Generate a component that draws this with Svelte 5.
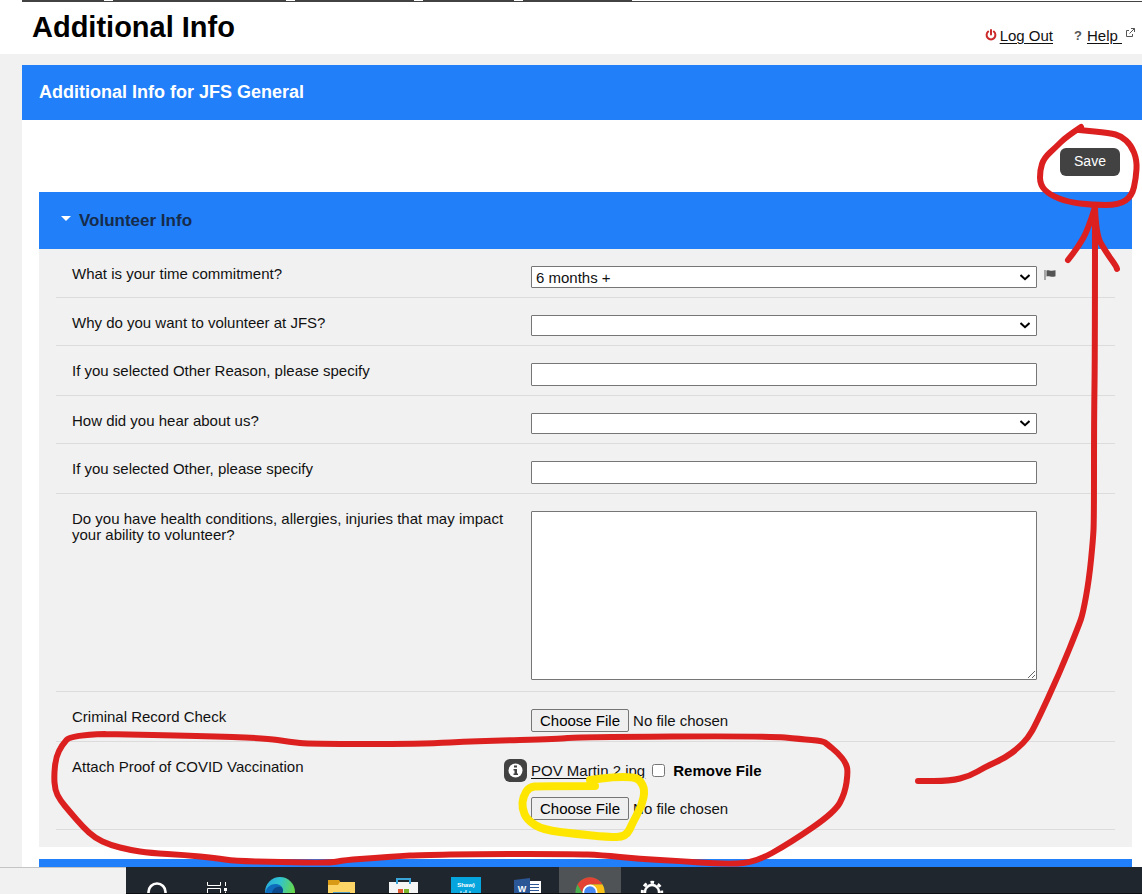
<script>
    let commitment = $state('6 months +');
    let reason = $state('');
    let source = $state('');
    let removeFile = $state(false);
    let open = $state(true);

    const tabs = [82, 173, 119, 91, 109];

    const marks = [
        {
            name: 'red',
            points: [[1081, 127], [1066, 137], [1056, 147], [1044, 158], [1040, 170], [1040, 185], [1050, 195], [1068, 202], [1092, 205], [1119, 205], [1132, 196], [1136, 178], [1137, 160], [1131, 145], [1121, 136], [1110, 133], [1079, 130]]
        },
        { name: 'red', points: [[1095, 207], [1088, 230], [1078, 247], [1068, 260]] },
        { name: 'red', points: [[1095, 207], [1096, 235], [1106, 252], [1116, 266], [1117, 269]] },
        {
            name: 'red',
            points: [[1095, 207], [1095, 350], [1094, 420], [1094, 520], [1093, 540], [1089, 580], [1083, 613], [1079, 625], [1060, 672], [1036, 724], [1028, 738], [1018, 748], [1005, 758], [985, 767], [970, 776], [950, 781], [918, 781]]
        },
        {
            name: 'red',
            points: [[105, 734], [71, 735], [62, 745], [56, 757], [54, 775], [55, 790], [60, 800], [70, 812], [83, 827], [95, 838], [110, 845], [130, 850], [150, 853], [185, 855], [215, 858], [235, 861], [280, 862], [330, 863], [345, 860], [375, 858], [400, 856], [420, 855], [480, 854], [575, 854], [600, 855], [640, 859], [680, 861], [720, 864], [754, 863], [790, 843], [835, 812], [845, 793], [848, 772], [846, 763], [838, 753], [827, 744], [823, 741], [800, 739], [770, 736], [575, 737], [560, 739], [480, 741], [420, 744], [310, 744], [290, 742], [265, 738], [200, 736], [105, 734]]
        },
        {
            name: 'yellow',
            points: [[595, 786], [540, 786], [529, 787], [523, 797], [522, 808], [527, 820], [543, 830], [577, 834], [607, 837], [626, 837], [633, 822], [642, 805], [645, 790], [640, 780], [633, 777], [613, 777], [590, 780]]
        }
    ];

    // smooth the pen points by curving through the middle of each segment
    function toPath(points) {
        let d = `M${points[0]}`;
        for (let i = 1; i < points.length - 1; i++) {
            const [x, y] = points[i];
            const [nx, ny] = points[i + 1];
            d += ` Q${x} ${y} ${(x + nx) / 2} ${(y + ny) / 2}`;
        }
        return d + ` L${points[points.length - 1]}`;
    }
</script>

<div class="screen">
    <div class="top">
        <nav class="tabs" aria-label="Sections">
            {#each tabs as width}
                <span class="tab" style="width: {width}px"></span>
            {/each}
        </nav>
    </div>

    <header class="header">
        <h1>Additional Info</h1>
        <div class="links">
            <svg class="power" viewBox="0 0 12 12" fill="none" stroke="#cc2a2a" stroke-width="2" stroke-linecap="round">
                <path d="M3.2 2.6A4.4 4.4 0 1 0 8.8 2.6M6 1V5.6" />
            </svg>
            <a href="#logout">Log Out</a>
            <span class="question">?</span>
            <a class="help" href="#help">Help&nbsp;</a>
            <svg class="external" viewBox="0 0 11 11" fill="none" stroke="#555">
                <path d="M4 3.5H1.5V9.500H7.500V7M4.500 6.500L9.500 1.500M6 1.500H9.500V5" />
            </svg>
        </div>
    </header>

    <main class="main">
        <h2>Additional Info for JFS General</h2>
        <form onsubmit={(e) => e.preventDefault()}>
            <div class="toolbar">
                <button class="save" type="submit">Save</button>
            </div>

            <section class="panel">
                <h3>
                    <button class="toggle" type="button" aria-expanded={open} onclick={() => (open = !open)}>
                        <svg viewBox="0 0 10 5" fill="#fff"><path d="M0 0H10L5 5Z" /></svg>
                        Volunteer Info
                    </button>
                </h3>
                {#if open}
                    <div class="fields">
                        <div class="row">
                            <div class="label"><label for="commitment">What is your time commitment?</label></div>
                            <select id="commitment" class="filled" bind:value={commitment}>
                                <option>6 months +</option>
                            </select>
                            <svg class="flag" viewBox="0 0 12 12">
                                <path d="M1 1V11" stroke="#888" stroke-width="1.400" />
                                <path d="M2.500 1.500C4.500 0.300 6 2.600 11.500 1.200V7.200C7 9 5.500 6.200 2.500 7.600Z" fill="#555" />
                            </svg>
                        </div>
                        <div class="row">
                            <div class="label"><label for="reason">Why do you want to volunteer at JFS?</label></div>
                            <select id="reason" bind:value={reason}>
                                <option value=""></option>
                            </select>
                        </div>
                        <div class="row">
                            <div class="label"><label for="other-reason">If you selected Other Reason, please specify</label></div>
                            <input id="other-reason" type="text" />
                        </div>
                        <div class="row">
                            <div class="label"><label for="source">How did you hear about us?</label></div>
                            <select id="source" bind:value={source}>
                                <option value=""></option>
                            </select>
                        </div>
                        <div class="row">
                            <div class="label"><label for="other-source">If you selected Other, please specify</label></div>
                            <input id="other-source" type="text" />
                        </div>
                        <div class="row">
                            <div class="label">
                                <label for="health">Do you have health conditions, allergies, injuries that may impact your ability to volunteer?</label>
                            </div>
                            <textarea id="health"></textarea>
                        </div>
                        <div class="row">
                            <div class="label"><label for="record">Criminal Record Check</label></div>
                            <input id="record" type="file" />
                        </div>
                        <div class="row">
                            <div class="label">
                                <label for="vaccination">Attach Proof of COVID Vaccination</label>
                                <svg class="info" viewBox="0 0 23 23">
                                    <rect width="23" height="23" rx="6" fill="#424242" />
                                    <circle cx="11.500" cy="11.500" r="7" fill="#fff" />
                                    <path d="M10 6.500H13V8.500H10ZM9.500 10H13V14.500H14V16H9.500V14.500H10.500V11.500H9.500Z" fill="#424242" />
                                </svg>
                            </div>
                            <div class="upload">
                                <div class="current">
                                    <a href="#file">POV Martin 2.jpg</a>
                                    <input id="remove" type="checkbox" bind:checked={removeFile} />
                                    <label for="remove">Remove File</label>
                                </div>
                                <input id="vaccination" type="file" />
                            </div>
                        </div>
                    </div>
                {/if}
            </section>
            <section class="panel next"></section>
        </form>
    </main>

    <svg class="marks" viewBox="0 0 1142 894" preserveAspectRatio="none" aria-hidden="true">
        {#each marks as mark}
            <path class={mark.name} d={toPath(mark.points)} />
        {/each}
    </svg>

    <footer class="bottom">
        <div class="status"></div>
        <div class="taskbar">
            <button aria-label="Cortana">
                <svg viewBox="0 0 32 27" fill="none" stroke="#fff" stroke-width="2.600"><circle cx="16" cy="25" r="8.500" /></svg>
            </button>
            <button aria-label="Task view">
                <svg viewBox="0 0 32 27" fill="none" stroke="#fff">
                    <path d="M5.500 15V18.500H18.500V15M5.500 27V21.500H18.500V27M23.500 15V19M23.500 24.500V27" />
                    <path d="M22 21H25V24H22Z" fill="#fff" stroke="none" />
                </svg>
            </button>
            <button aria-label="Edge">
                <svg viewBox="0 0 32 27">
                    <defs>
                        <linearGradient id="edge" x1="0" y1="0" x2="1" y2="0.300">
                            <stop offset="0" stop-color="#25a8dd" />
                            <stop offset="0.500" stop-color="#31c3cf" />
                            <stop offset="1" stop-color="#66d84c" />
                        </linearGradient>
                    </defs>
                    <circle cx="16" cy="25" r="15" fill="url(#edge)" />
                    <path d="M1 26C3 17 12 15 17 19C20 22 19 25 18 27H1Z" fill="#0f6cbd" />
                    <path d="M8 27C8 22 12 19 17 20C20 22 19 25 18 27Z" fill="#0b4a8c" />
                </svg>
            </button>
            <button aria-label="File Explorer">
                <svg viewBox="0 0 32 27">
                    <path d="M2 13H13L15 16V20H2Z" fill="#d99a16" />
                    <path d="M2 18H12L14 15H29V27H2Z" fill="#fdd567" />
                    <path d="M7 27V25H24V27Z" fill="#4e9ac4" />
                </svg>
            </button>
            <button aria-label="Store">
                <svg viewBox="0 0 32 27">
                    <path d="M1 15H30V27H1Z" fill="#f5f5f5" />
                    <path d="M9 17V12H22V17" fill="none" stroke="#3aa5d8" stroke-width="2" />
                    <path d="M10 22H15V27H10Z" fill="#e0562e" />
                    <path d="M16 22H21V27H16Z" fill="#7bb52a" />
                </svg>
            </button>
            <button aria-label="Shaw">
                <svg viewBox="0 0 32 27">
                    <path d="M1 10H31V27H1Z" fill="#06a5dd" />
                    <text x="16" y="20" text-anchor="middle" font-size="6" font-weight="bold" fill="#fff">Shaw)</text>
                    <path d="M9 26V27M11 24V27M14 25V27M16 23V27M18 26V27M20 24V27M22 26V27" stroke="#fff" />
                </svg>
            </button>
            <button aria-label="Word">
                <svg viewBox="0 0 32 27">
                    <path d="M16 14H29V27H16Z" fill="#fff" />
                    <path d="M18 17.500H27M18 20.500H27M18 23.500H27M18 26.500H27" stroke="#2b5797" />
                    <path d="M2 13L18 11V27H2Z" fill="#2b5797" />
                    <text x="10" y="25" text-anchor="middle" font-size="9" font-weight="bold" fill="#fff">W</text>
                </svg>
            </button>
            <button class="active" aria-label="Chrome">
                <svg viewBox="0 0 32 27">
                    <circle cx="16" cy="25" r="14.500" fill="#4aae50" />
                    <path d="M3.500 17.500A14.500 14.500 0 0 1 28.500 17.500H16A7.500 7.500 0 0 0 9 27Z" fill="#e34133" />
                    <path d="M16 17.500H28.500A14.500 14.500 0 0 1 30.500 27H16Z" fill="#fbc116" />
                    <circle cx="16" cy="25" r="7.500" fill="#fff" />
                    <circle cx="16" cy="25" r="5.800" fill="#4688f1" />
                </svg>
            </button>
            <button aria-label="Settings">
                <svg viewBox="0 0 32 27" fill="none" stroke="#fff">
                    <circle cx="16" cy="25" r="7" stroke-width="2.400" />
                    <circle cx="16" cy="25" r="9.700" stroke-width="3" stroke-dasharray="3.600 4.018" stroke-dashoffset="1.800" />
                </svg>
            </button>
        </div>
    </footer>
</div>

<style>
    :global(body) {
        margin: 0;
        font-family: "Liberation Sans", Arial, sans-serif;
        font-size: 15px;
        line-height: 16px;
        color: #111;
    }

    .screen {
        position: relative;
        height: 100vh;
        overflow: hidden;
        background: #f1f1f1;
    }

    a {
        color: #111;
        text-decoration: underline;
        text-underline-offset: 2px;
    }

    .top {
        padding-left: 22px;
        background: #fff;
    }

    .tabs {
        display: flex;
        gap: 9px;
        border-bottom: 1px solid #424242;
    }

    .tab {
        height: 1px;
        background: #424242;
    }

    .header {
        display: flex;
        justify-content: space-between;
        height: 52px;
        padding: 0 6px 0 32px;
        background: #fff;
    }

    h1 {
        margin: 8px 0 0;
        font-size: 29px;
        line-height: 34px;
        color: #000;
    }

    .links {
        display: flex;
        align-items: flex-start;
        padding-top: 26px;
    }

    .power {
        width: 12px;
        height: 12px;
        margin: 1px 3px 0 0;
    }

    .question {
        margin: 0 5px 0 21px;
        font-size: 13px;
        font-weight: bold;
        color: #555;
    }

    .external {
        width: 11px;
        height: 11px;
        margin-left: 3px;
        margin-top: -1px;
    }

    .main {
        margin: 11px 0 0 22px;
        background: #fff;
    }

    h2 {
        margin: 0;
        padding: 0 17px;
        font-size: 18px;
        line-height: 55px;
        color: #fff;
        background: #207ff9;
    }

    form {
        padding: 0 10px 0 17px;
    }

    .toolbar {
        display: flex;
        justify-content: flex-end;
        padding: 28px 12px 16px;
    }

    .save {
        width: 60px;
        height: 28px;
        padding: 0 0 2px;
        border: 0;
        border-radius: 6px;
        font: 14px "Liberation Sans", Arial, sans-serif;
        color: #fff;
        background: #424242;
    }

    h3 {
        margin: 0;
        background: #207ff9;
    }

    .toggle {
        display: flex;
        align-items: center;
        gap: 8px;
        width: 100%;
        height: 57px;
        padding: 0 22px;
        border: 0;
        font: bold 17px "Liberation Sans", Arial, sans-serif;
        color: #172b4a;
        background: none;
    }

    .toggle svg {
        width: 10px;
        height: 5px;
        margin-bottom: 5px;
    }

    .fields {
        padding: 0 17px 17px;
        background: #f1f1f1;
    }

    .row {
        display: grid;
        grid-template-columns: 475fr 506fr 78fr;
        align-items: start;
        padding: 17px 0 9px;
        border-bottom: 1px solid #dcdcdc;
    }

    .label {
        display: flex;
        justify-content: space-between;
        padding: 0 4px 0 16px;
    }

    .label label {
        padding-right: 8px;
    }

    select,
    input,
    textarea {
        box-sizing: border-box;
        width: 100%;
        margin: 0;
        font: 15px "Liberation Sans", Arial, sans-serif;
        color: #111;
    }

    select,
    input[type="text"],
    textarea {
        border: 1px solid #767676;
        border-radius: 1px;
        background: #fff;
    }

    select {
        appearance: none;
        height: 21px;
        padding: 0 24px 0 4px;
        background: url("data:image/svg+xml,%3Csvg xmlns='http://www.w3.org/2000/svg' width='10' height='7' fill='none' stroke='%23000' stroke-width='2'%3E%3Cpath d='M0.500 1L5 5.200L9.500 1'/%3E%3C/svg%3E") no-repeat right 6px center #fff;
    }

    .filled {
        height: 22px;
    }

    input[type="text"] {
        height: 23px;
    }

    textarea {
        display: block;
        height: 169px;
        margin-bottom: 2px;
    }

    input[type="file"] {
        height: 23px;
    }

    input::file-selector-button {
        height: 23px;
        padding: 1px 8px;
        border: 1px solid #767676;
        border-radius: 2px;
        font: inherit;
        background: #efefef;
    }

    .flag {
        width: 12px;
        height: 12px;
        margin: 3px 0 0 7px;
    }

    .info {
        flex: none;
        width: 23px;
        height: 23px;
    }

    .upload {
        display: grid;
        gap: 15px;
    }

    .current {
        display: flex;
        align-items: center;
        height: 23px;
    }

    .current input {
        width: 13px;
        height: 13px;
        margin: 0 8px 0 7px;
    }

    .current label {
        font-weight: bold;
        color: #000;
    }

    .next {
        height: 57px;
        margin-top: 12px;
        background: #207ff9;
    }

    .marks {
        position: absolute;
        inset: 0;
        width: 100%;
        height: 100%;
        pointer-events: none;
    }

    .marks path {
        fill: none;
        stroke-linecap: round;
        stroke-linejoin: round;
    }

    .red {
        stroke: #dc2020;
        stroke-width: 6px;
    }

    .yellow {
        stroke: #ffe600;
        stroke-width: 8px;
    }

    .bottom {
        position: absolute;
        right: 0;
        bottom: 0;
        left: 0;
        display: flex;
        height: 27px;
    }

    .status {
        box-sizing: border-box;
        width: 126px;
        border-top: 1px solid #c4c4c4;
        background: #f1f1f1;
    }

    .taskbar {
        display: flex;
        flex: 1;
        box-sizing: border-box;
        overflow: hidden;
        border-bottom: 1px solid #0c0e10;
        background: #20262d;
    }

    .taskbar button {
        display: flex;
        justify-content: center;
        width: 62px;
        padding: 0;
        border: 0;
        background: none;
    }

    .taskbar button:first-child {
        width: 61px;
    }

    .taskbar svg {
        flex: none;
        width: 32px;
        height: 27px;
    }

    .taskbar .active {
        background: #505356;
    }
</style>
